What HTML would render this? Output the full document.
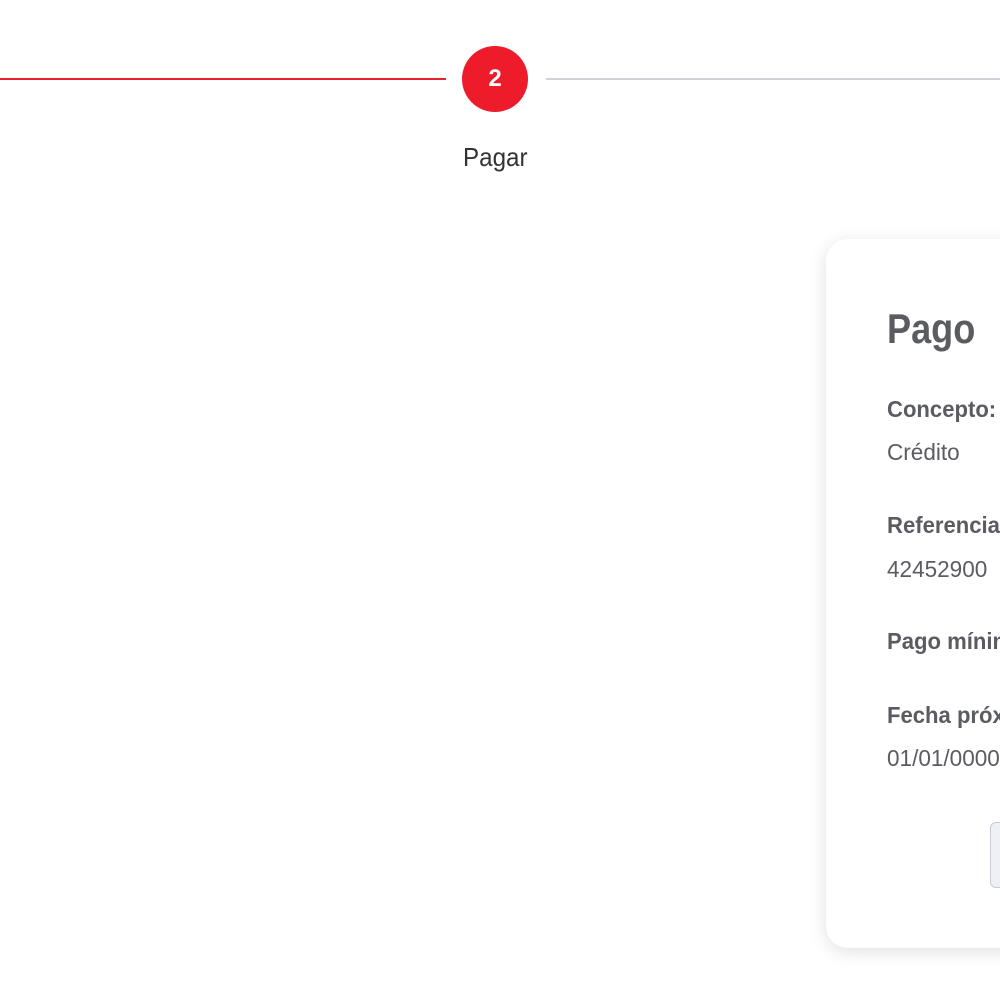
<!DOCTYPE html>
<html><head><meta charset="utf-8"><style>
body{margin:0;width:1000px;height:1000px;background:#fff;overflow:hidden;position:relative;font-family:"Liberation Sans",sans-serif;}
.a{position:absolute;}
.t{transform:scaleX(.93);transform-origin:left top;white-space:nowrap;}
.lb{font-weight:bold;font-size:23px;color:#5b5c62;transform:scaleX(.96);}
.v{font-size:23px;color:#5b5c62;transform:scaleX(.98);}
</style></head><body>
<div class="a" style="left:0;top:78px;width:446px;height:2px;background:#e8202d"></div>
<div class="a" style="left:546px;top:78px;width:454px;height:2px;background:#cfd2d8"></div>
<div class="a" style="left:462px;top:46px;width:66px;height:66px;border-radius:50%;background:#ee1c2b;color:#fff;font-size:24px;font-weight:bold;text-align:center;line-height:66px">2</div>
<div class="a t" style="left:463px;top:142px;font-size:26px;color:#333">Pagar</div>
<div class="a" style="left:826px;top:239px;width:220px;height:709px;border-radius:22px;background:#fff;box-shadow:0 4px 18px rgba(0,0,0,.12)"></div>
<div class="a" style="left:887px;top:305px;font-size:42px;font-weight:bold;color:#5b5c62;transform:scaleX(.86);transform-origin:left top">Pago</div>
<div class="a t lb" style="left:887px;top:396px">Concepto:</div>
<div class="a t v" style="left:887px;top:439px">Crédito</div>
<div class="a t lb" style="left:887px;top:512px">Referencia</div>
<div class="a t v" style="left:887px;top:556px">42452900</div>
<div class="a t lb" style="left:887px;top:628px">Pago mínimo</div>
<div class="a t lb" style="left:887px;top:702px">Fecha próxima</div>
<div class="a t v" style="left:887px;top:745px">01/01/0000</div>
<div class="a" style="left:990px;top:822px;width:40px;height:64px;border:1px solid #c8ccd4;border-radius:6px;background:#eef0f6"></div>
</body></html>
